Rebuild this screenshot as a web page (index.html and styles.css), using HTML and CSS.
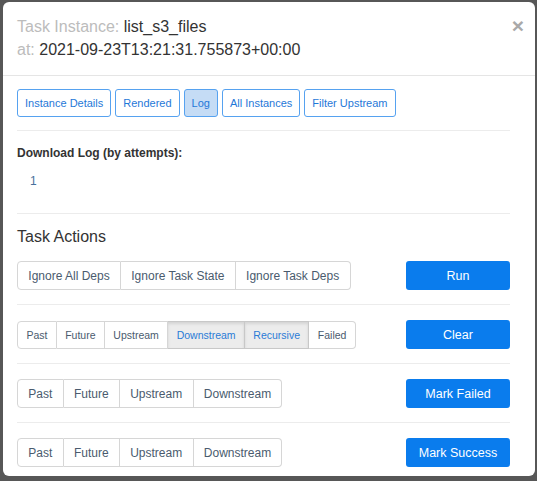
FILE: index.html
```html
<!DOCTYPE html>
<html>
<head>
<meta charset="utf-8">
<link rel="stylesheet" href="styles.css">
</head>
<body>
<div class="modal">
  <div class="modal-header">
    <div class="title">
      <div class="line"><span class="muted">Task Instance:</span> list_s3_files</div>
      <div class="line"><span class="muted">at:</span> 2021-09-23T13:21:31.755873+00:00</div>
    </div>
    <span class="close">×</span>
  </div>
  <div class="modal-body">
    <div class="nav">
      <button class="nav-btn">Instance Details</button>
      <button class="nav-btn">Rendered</button>
      <button class="nav-btn active">Log</button>
      <button class="nav-btn">All Instances</button>
      <button class="nav-btn">Filter Upstream</button>
    </div>
    <hr class="sep sep-nav">
    <div class="dl-label">Download Log (by attempts):</div>
    <div class="attempts"><a class="attempt">1</a></div>
    <hr class="sep sep-dl">
    <h4 class="actions-title">Task Actions</h4>

    <div class="action-row">
      <div class="group">
        <button class="g-btn">Ignore All Deps</button>
        <button class="g-btn">Ignore Task State</button>
        <button class="g-btn">Ignore Task Deps</button>
      </div>
      <button class="primary">Run</button>
    </div>
    <hr class="sep">
    <div class="action-row">
      <div class="group small">
        <button class="g-btn">Past</button>
        <button class="g-btn">Future</button>
        <button class="g-btn">Upstream</button>
        <button class="g-btn active">Downstream</button>
        <button class="g-btn active">Recursive</button>
        <button class="g-btn">Failed</button>
      </div>
      <button class="primary">Clear</button>
    </div>
    <hr class="sep">
    <div class="action-row">
      <div class="group">
        <button class="g-btn">Past</button>
        <button class="g-btn">Future</button>
        <button class="g-btn">Upstream</button>
        <button class="g-btn">Downstream</button>
      </div>
      <button class="primary">Mark Failed</button>
    </div>
    <hr class="sep">
    <div class="action-row">
      <div class="group">
        <button class="g-btn">Past</button>
        <button class="g-btn">Future</button>
        <button class="g-btn">Upstream</button>
        <button class="g-btn">Downstream</button>
      </div>
      <button class="primary">Mark Success</button>
    </div>
  </div>
</div>
</body>
</html>
```

FILE: styles.css
```css
* { box-sizing: border-box; }
html, body { margin: 0; padding: 0; }
body {
  background: #575757;
  padding: 2px 2px 4px 3px;
  font-family: "Liberation Sans", Arial, Helvetica, sans-serif;
  height: 481px;
  overflow: hidden;
}
.modal {
  width: 532px;
  background: #fff;
  border-radius: 6px;
  padding-bottom: 9px;
}
.modal-header {
  display: flex;
  justify-content: space-between;
  align-items: flex-start;
  padding: 13px 11px 14px 14px;
  border-bottom: 1px solid #e5e5e5;
}
.title { font-size: 16px; line-height: 23px; color: #333; }
.muted { color: #bcbcbc; }
.close {
  font-size: 21px;
  font-weight: bold;
  color: #a9a9a9;
  line-height: 20px;
  margin-top: 1px;
}
.modal-body { padding: 13px 25px 0 14px; }
.nav { display: flex; gap: 4px; }
button { font-family: inherit; cursor: pointer; }
.nav-btn {
  height: 28px;
  padding: 0 7px;
  font-size: 11px;
  color: #1f78d8;
  background: #fff;
  border: 1px solid #56a2f0;
  border-radius: 3px;
}
.nav-btn.active { background: #c5dcf5; }
.sep { border: 0; border-top: 1px solid #ececec; margin: 14px 0 15px; height: 0; }
.sep-nav { margin: 13px 0 14px; }
.dl-label { font-size: 12px; font-weight: bold; color: #333; line-height: 17px; }
.attempts { margin-top: 9px; padding-left: 13px; line-height: 17px; }
.attempt { font-size: 12px; color: #47709c; }
.sep-dl { margin: 23px 0 12px; }
.actions-title {
  margin: 0 0 13px;
  font-size: 16px;
  font-weight: normal;
  line-height: 22px;
  color: #333;
}
.action-row {
  display: flex;
  justify-content: space-between;
  align-items: center;
  height: 29px;
}
.group { display: flex; height: 29px; }
.g-btn {
  height: 100%;
  padding: 0 10.3px;
  font-size: 12px;
  color: #4a5b6e;
  background: #fff;
  border: 1px solid #d6d6d6;
  border-left-width: 0;
}
.g-btn:first-child { border-left-width: 1px; border-radius: 4px 0 0 4px; }
.g-btn:last-child { border-radius: 0 4px 4px 0; }
.group.small { height: 28px; }
.group.small .g-btn { font-size: 10.5px; padding: 0 8.4px; }
.g-btn.active {
  background: #ececec;
  color: #2a7bd6;
  box-shadow: inset 0 2px 3px rgba(0,0,0,0.1);
  border-color: #c8c8c8;
}
.primary {
  width: 104px;
  height: 29px;
  background: #0a7ced;
  color: #fff;
  border: 0;
  border-radius: 3px;
  font-size: 12.5px;
}
```
